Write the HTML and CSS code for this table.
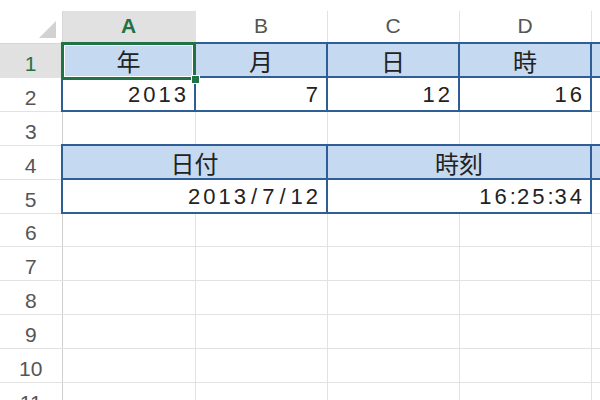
FILE: index.html
```html
<!DOCTYPE html>
<html lang="ja">
<head>
<meta charset="utf-8">
<link rel="stylesheet" href="styles.css">
</head>
<body>
<div class="sheet">
  <table class="grid">
    <colgroup>
      <col class="c-rh"><col class="c-a"><col class="c-n"><col class="c-n"><col class="c-n"><col class="c-e">
    </colgroup>
    <tr class="r-head">
      <th class="corner"><svg class="tri" width="17" height="17" viewBox="0 0 17 17"><polygon points="17,0 17,17 0,17" fill="#d2d2d2"/></svg></th>
      <th class="ch sel">A</th>
      <th class="ch">B</th>
      <th class="ch">C</th>
      <th class="ch">D</th>
      <th class="ch"></th>
    </tr>
    <tr>
      <th class="rh sel">1</th>
      <td class="hd">年</td>
      <td class="hd">月</td>
      <td class="hd">日</td>
      <td class="hd">時</td>
      <td class="hd"></td>
    </tr>
    <tr>
      <th class="rh">2</th>
      <td class="num bx">2013</td>
      <td class="num bx">7</td>
      <td class="num bx">12</td>
      <td class="num bx">16</td>
      <td class="bl"></td>
    </tr>
    <tr>
      <th class="rh">3</th>
      <td></td><td></td><td></td><td></td><td></td>
    </tr>
    <tr>
      <th class="rh">4</th>
      <td class="hd" colspan="2">日付</td>
      <td class="hd" colspan="2">時刻</td>
      <td class="hd"></td>
    </tr>
    <tr>
      <th class="rh">5</th>
      <td class="num bx" colspan="2">2013<span class="sl">/</span>7<span class="sl">/</span>12</td>
      <td class="num bx" colspan="2">16<span class="co">:</span>25<span class="co">:</span>34</td>
      <td class="bl"></td>
    </tr>
    <tr class="r33"><th class="rh">6</th><td></td><td></td><td></td><td></td><td></td></tr>
    <tr><th class="rh">7</th><td></td><td></td><td></td><td></td><td></td></tr>
    <tr><th class="rh">8</th><td></td><td></td><td></td><td></td><td></td></tr>
    <tr><th class="rh">9</th><td></td><td></td><td></td><td></td><td></td></tr>
    <tr><th class="rh">10</th><td></td><td></td><td></td><td></td><td></td></tr>
    <tr><th class="rh">11</th><td></td><td></td><td></td><td></td><td></td></tr>
  </table>
  <div class="selection"><span class="handle"></span></div>
</div>
</body>
</html>
```

FILE: styles.css
```css
html, body {
  margin: 0;
  padding: 0;
  background: #fff;
  overflow: hidden;
}
.sheet {
  position: relative;
  width: 600px;
  height: 400px;
  overflow: hidden;
  padding-top: 11px;
  box-sizing: border-box;
}
.grid {
  border-collapse: collapse;
  table-layout: fixed;
  width: 601px;
  font-family: "Liberation Sans", Arial, sans-serif;
  font-size: 21px;
  color: #222;
}
.c-rh { width: 62px; }
.c-a { width: 133px; }
.c-n { width: 132px; }
.c-e { width: 10px; }
.grid tr { height: 34px; }
.grid tr.r-head { height: 32px; }
.grid tr.r33 { height: 33px; }
.grid th, .grid td {
  border: 1px solid #e2e2e2;
  padding: 0;
  line-height: 24px;
  white-space: nowrap;
  overflow: hidden;
}
.grid th {
  font-weight: normal;
  color: #555;
}
.grid th.corner {
  border-color: #d6d6d6;
  border-top: none;
  border-left: none;
  vertical-align: bottom;
  text-align: right;
  line-height: 0;
  padding: 0 6px 5px 0;
}
.tri {
  display: inline-block;
}
.ch {
  text-align: center;
  vertical-align: bottom;
  padding-bottom: 4px !important;
  border-top: none !important;
  border-bottom-color: #d4d4d4 !important;
  border-color: #dcdcdc;
}
.ch.sel {
  background: #e1e1e1;
  color: #217346;
  font-weight: bold;
}
.rh {
  text-align: center;
  vertical-align: bottom;
  padding-bottom: 1px !important;
  border-left: none !important;
  border-right-color: #cfcfcf !important;
}
.rh.sel {
  background: #e1e1e1;
  color: #217346;
}
.grid td.hd {
  background: #c5d9f1;
  border: 2px solid #2f5e96;
  text-align: center;
  vertical-align: bottom;
  font-family: "Noto Sans CJK JP", sans-serif;
  font-size: 24px;
  line-height: 28px;
  padding-bottom: 1px;
  color: #222;
}
.grid td.num {
  text-align: right;
  vertical-align: bottom;
  font-size: 22px;
  letter-spacing: 3px;
  padding-right: 5px;
  padding-bottom: 3px;
  color: #222;
}
.grid td.bx {
  border: 2px solid #2f5e96;
}
.grid td.bl {
  border-left: 2px solid #2f5e96;
}
.sl {
  letter-spacing: 5px;
  padding-left: 2px;
}
.co {
  letter-spacing: 1px;
}
.selection {
  position: absolute;
  left: 61px;
  top: 42px;
  width: 135px;
  height: 38px;
  box-sizing: border-box;
  border: 3px solid #217346;
  box-shadow: inset 0 0 0 1px #fff;
}
.handle {
  position: absolute;
  right: -7px;
  bottom: -7px;
  width: 7px;
  height: 7px;
  background: #217346;
  border: 1px solid #fff;
}
```
